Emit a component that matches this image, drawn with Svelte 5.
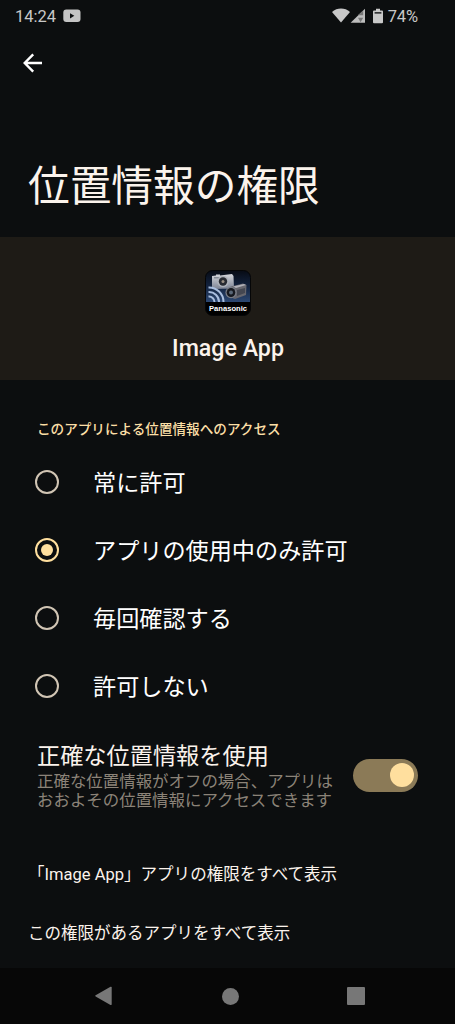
<script>
  let selected = $state(1);
  let precise = $state(true);
  const options = ['常に許可', 'アプリの使用中のみ許可', '毎回確認する', '許可しない'];
</script>

<div class="screen">
  <header class="status">
    <span class="time">14:24</span>
    <svg class="yt" width="18" height="14" viewBox="0 0 18 14"><rect x=".3" y=".6" width="17.2" height="12.4" rx="3" fill="#c4c4c4" /><path d="M7 4.200v5.200l4.300-2.600z" fill="#0c0e0f" /></svg>
    <svg class="signals" width="52" height="17" viewBox="0 0 52 17" fill="#c8c8c8">
      <path d="M0 4C5-.6 13-.6 18 4L9 14.600z" />
      <path d="M33 .8v14H18.600z" fill="#bdbdbd" />
      <path d="M31.200 2.500v4.700h-5.500zM26 9.800h5.200l-2.600 4.400z" fill="#777" />
      <path d="M44 .8h4v1.600h2q1 0 1 1v10.800q0 1-1 1h-8q-1 0-1-1V3.400q0-1 1-1h2z" />
      <path d="M42.600 4h6.800v1.700h-6.800z" fill="#343536" />
    </svg>
    <span class="percent">74%</span>
  </header>

  <nav class="toolbar">
    <button class="back" aria-label="戻る">
      <svg width="20" height="20" viewBox="0 0 20 20" fill="none" stroke="#fff" stroke-width="2.400"><path d="M19 10H2M10.200 1.300 1.700 10l8.500 8.700" /></svg>
    </button>
  </nav>

  <h1>位置情報の権限</h1>

  <section class="app">
    <svg width="46" height="46" viewBox="0 0 46 46">
      <defs>
        <linearGradient id="sky" x1="0" y1="0" x2="0" y2="1"><stop stop-color="#070b14" /><stop offset=".35" stop-color="#13233f" /><stop offset=".7" stop-color="#2c4872" /><stop offset=".71" stop-color="#000" /></linearGradient>
        <linearGradient id="metal" x1="0" y1="0" x2="0" y2="1"><stop stop-color="#d5d7dc" /><stop offset="1" stop-color="#7d8494" /></linearGradient>
      </defs>
      <rect x=".5" y=".5" width="45" height="45" rx="7" fill="url(#sky)" stroke="#050607" />
      <path d="M7 6l4-.5V4.500h4v1L27 4l1.500 2 .5 12.500L7 19z" fill="url(#metal)" />
      <rect x="9" y="7" width="5" height="1.500" fill="#858b96" />
      <circle cx="18" cy="11.500" r="5.800" fill="#aeb2ba" />
      <circle cx="18" cy="11.500" r="4.200" fill="#272a31" />
      <circle cx="18" cy="11.500" r="1.500" fill="#9a8f84" />
      <path d="M26 16.500l12-3 3.500 1.500-.5 10-11 4-8-3v-7z" fill="#67676e" />
      <path d="M28 16.500l11-2.500 2 1-10 3z" fill="#b2b2b9" />
      <path d="M32 20l8-2v5l-8 3z" fill="#444751" />
      <ellipse cx="26" cy="22.500" rx="5.600" ry="5.800" fill="#777b85" />
      <ellipse cx="26" cy="22.500" rx="4.300" ry="4.600" fill="#17191f" />
      <circle cx="26" cy="22.500" r="2" fill="#596777" />
      <g fill="none" stroke="#a9bede" stroke-width="2"><path d="M3.500 17.500A14.500 14.500 0 0 1 18.500 32M3.500 22A10 10 0 0 1 14 32M3.500 26.500A5.500 5.500 0 0 1 9.500 32" /></g>
      <rect x="1" y="32" width="44" height="7" fill="#000" />
      <text x="23" y="40.800" text-anchor="middle" textLength="38" lengthAdjust="spacingAndGlyphs" font-family="Liberation Sans, Arial, sans-serif" font-size="8" font-weight="700" fill="#fff">Panasonic</text>
    </svg>
    <h2>Image App</h2>
  </section>

  <h3>このアプリによる位置情報へのアクセス</h3>

  <div class="options" role="radiogroup">
    {#each options as label, i}
      <button class="option" role="radio" aria-checked={selected === i} onclick={() => (selected = i)}>
        <span class="radio" class:on={selected === i}></span>
        <span class="label">{label}</span>
      </button>
    {/each}
  </div>

  <section class="precise">
    <div class="copy">
      <div class="heading">正確な位置情報を使用</div>
      <p>正確な位置情報がオフの場合、アプリは<br />おおよその位置情報にアクセスできます</p>
    </div>
    <button class="switch" class:off={!precise} role="switch" aria-checked={precise} aria-label="正確な位置情報を使用" onclick={() => (precise = !precise)}><span></span></button>
  </section>

  <div class="link first">「Image App」アプリの権限をすべて表示</div>
  <div class="link second">この権限があるアプリをすべて表示</div>

  <footer>
    <svg width="18" height="20" viewBox="0 0 18 20"><path d="M.6 9.200 15.500.800q1.200-.5 1.200.7v16.800q0 1.200-1.200.6L.6 10.400q-.8-.6 0-1.200z" fill="#777" /></svg>
    <span class="home"></span>
    <span class="recent"></span>
  </footer>
</div>

<style>
  :global(body) { margin: 0; background: #0c0e0f; }
  .screen {
    width: 455px; height: 1024px; box-sizing: border-box; overflow: hidden;
    display: flex; flex-direction: column;
    background: #0c0e0f; color: #fbf3ec;
    font-family: Roboto, "Noto Sans CJK JP", sans-serif;
  }
  .screen > * { flex-shrink: 0; }
  button { border: 0; padding: 0; background: none; color: inherit; font: inherit; text-align: left; }
  h1, h2, h3, p { margin: 0; font-weight: 400; white-space: nowrap; }
  .status { height: 32px; display: flex; align-items: center; padding: 0 37px 0 15px; box-sizing: border-box; color: #c8c8c8; font-size: 16.500px; }
  .yt { margin-left: 7px; }
  .signals { margin-left: auto; margin-right: 4px; }
  .percent { letter-spacing: -.1px; }
  .toolbar { height: 62px; padding-left: 23px; display: flex; align-items: center; }
  .back { display: flex; }
  h1 { height: 143px; padding: 69px 0 0 28px; box-sizing: border-box; font-size: 41.700px; line-height: 48px; }
  .app { height: 143px; background: #1e1b16; display: flex; flex-direction: column; align-items: center; padding-top: 33px; box-sizing: border-box; }
  h2 { margin-top: 16px; padding-left: 1px; font-size: 23.200px; line-height: 32px; font-weight: 500; }
  h3 { height: 68px; padding: 39px 0 0 37px; box-sizing: border-box; color: #fbdfa6; font-size: 13.600px; line-height: 21px; font-weight: 500; }
  .options { display: flex; flex-direction: column; }
  .option { height: 68px; display: flex; align-items: center; padding-left: 35px; }
  .label { margin-left: 35px; padding-top: 3px; font-size: 23.150px; line-height: 34px; color: #fff; white-space: nowrap; }
  .radio { width: 24px; height: 24px; margin-right: -1px; box-sizing: border-box; border: 2px solid #d1c5b4; border-radius: 50%; display: grid; place-items: center; }
  .radio.on { border-color: #ffdf9e; }
  .radio.on::after { content: ""; width: 12px; height: 12px; border-radius: 50%; background: #ffdf9e; }
  .precise { height: 104px; display: flex; align-items: center; justify-content: space-between; padding: 6px 37px 0 37px; box-sizing: border-box; }
  .heading { font-size: 23.200px; line-height: 32px; white-space: nowrap; }
  p { color: #8b8378; font-size: 16.450px; line-height: 19.500px; }
  .switch { width: 65px; height: 33px; border-radius: 17px; background: #8b7a57; display: flex; align-items: center; justify-content: flex-end; padding-right: 4px; box-sizing: border-box; }
  .switch.off { justify-content: flex-start; padding-left: 4px; background: #4b4639; }
  .switch span { width: 24px; height: 24px; border-radius: 50%; background: #ffdf9e; }
  .link { height: 59px; font-size: 16.500px; line-height: 24px; box-sizing: border-box; padding-left: 28px; white-space: nowrap; }
  .first { margin-top: 39px; font-size: 16.550px; }
  .second { height: 43px; }
  footer { margin-top: auto; height: 56px; background: #070707; display: flex; align-items: center; justify-content: space-between; padding: 0 90px 0 95px; box-sizing: border-box; }
  .home { width: 17px; height: 17px; border-radius: 50%; background: #777; }
  .recent { width: 18px; height: 18px; border-radius: 1px; background: #777; }
</style>
